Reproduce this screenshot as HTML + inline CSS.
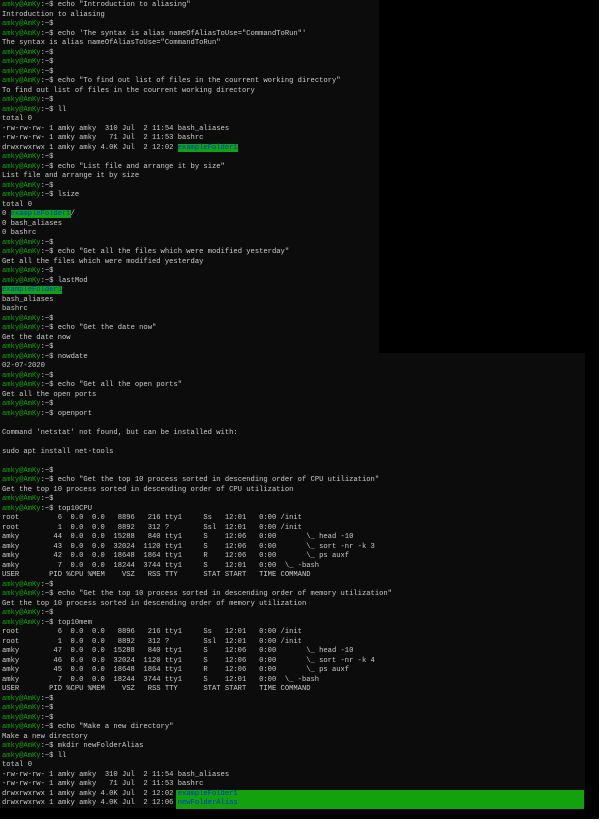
<!DOCTYPE html>
<html><head><meta charset="utf-8"><style>
html,body{margin:0;padding:0;background:#fff;width:605px;height:822px;overflow:hidden}
.bk{position:absolute;left:0;top:0;width:599px;height:819px;background:#000}
.a{position:absolute;left:0;top:0;width:379px;height:353px;background:#0c0c0c}
.b{position:absolute;left:0;top:353px;width:585px;height:455px;background:#0c0c0c}
.bar{position:absolute;left:176px;top:790px;width:408px;height:19px;background:#13a10e}
pre{position:absolute;left:2px;top:1px;margin:0;font-family:"Liberation Mono",monospace;font-size:7.15px;line-height:9.5px;color:#cccccc;white-space:pre}
.p{color:#13a10e}
.h{background:#13a10e;color:#0037da}
.f{color:#0037da}
</style></head><body>
<div class="bk"></div><div class="a"></div><div class="b"></div><div class="bar"></div>
<pre><span class="p">amky@AmKy</span>:~$ echo "Introduction to aliasing"
Introduction to aliasing
<span class="p">amky@AmKy</span>:~$
<span class="p">amky@AmKy</span>:~$ echo 'The syntax is alias nameOfAliasToUse="CommandToRun"'
The syntax is alias nameOfAliasToUse="CommandToRun"
<span class="p">amky@AmKy</span>:~$
<span class="p">amky@AmKy</span>:~$
<span class="p">amky@AmKy</span>:~$
<span class="p">amky@AmKy</span>:~$ echo "To find out list of files in the courrent working directory"
To find out list of files in the courrent working directory
<span class="p">amky@AmKy</span>:~$
<span class="p">amky@AmKy</span>:~$ ll
total 0
-rw-rw-rw- 1 amky amky  310 Jul  2 11:54 bash_aliases
-rw-rw-rw- 1 amky amky   71 Jul  2 11:53 bashrc
drwxrwxrwx 1 amky amky 4.0K Jul  2 12:02 <span class="h">exampleFolder1</span>
<span class="p">amky@AmKy</span>:~$
<span class="p">amky@AmKy</span>:~$ echo "List file and arrange it by size"
List file and arrange it by size
<span class="p">amky@AmKy</span>:~$
<span class="p">amky@AmKy</span>:~$ lsize
total 0
0 <span class="h">exampleFolder1</span>/
0 bash_aliases
0 bashrc
<span class="p">amky@AmKy</span>:~$
<span class="p">amky@AmKy</span>:~$ echo "Get all the files which were modified yesterday"
Get all the files which were modified yesterday
<span class="p">amky@AmKy</span>:~$
<span class="p">amky@AmKy</span>:~$ lastMod
<span class="h">exampleFolder1</span>
bash_aliases
bashrc
<span class="p">amky@AmKy</span>:~$
<span class="p">amky@AmKy</span>:~$ echo "Get the date now"
Get the date now
<span class="p">amky@AmKy</span>:~$
<span class="p">amky@AmKy</span>:~$ nowdate
02-07-2020
<span class="p">amky@AmKy</span>:~$
<span class="p">amky@AmKy</span>:~$ echo "Get all the open ports"
Get all the open ports
<span class="p">amky@AmKy</span>:~$
<span class="p">amky@AmKy</span>:~$ openport

Command 'netstat' not found, but can be installed with:

sudo apt install net-tools

<span class="p">amky@AmKy</span>:~$
<span class="p">amky@AmKy</span>:~$ echo "Get the top 10 process sorted in descending order of CPU utilization"
Get the top 10 process sorted in descending order of CPU utilization
<span class="p">amky@AmKy</span>:~$
<span class="p">amky@AmKy</span>:~$ top10CPU
root         6  0.0  0.0   8896   216 tty1     Ss   12:01   0:00 /init
root         1  0.0  0.0   8892   312 ?        Ssl  12:01   0:00 /init
amky        44  0.0  0.0  15288   840 tty1     S    12:06   0:00       \_ head -10
amky        43  0.0  0.0  32024  1120 tty1     S    12:06   0:00       \_ sort -nr -k 3
amky        42  0.0  0.0  18648  1864 tty1     R    12:06   0:00       \_ ps auxf
amky         7  0.0  0.0  18244  3744 tty1     S    12:01   0:00  \_ -bash
USER       PID %CPU %MEM    VSZ   RSS TTY      STAT START   TIME COMMAND
<span class="p">amky@AmKy</span>:~$
<span class="p">amky@AmKy</span>:~$ echo "Get the top 10 process sorted in descending order of memory utilization"
Get the top 10 process sorted in descending order of memory utilization
<span class="p">amky@AmKy</span>:~$
<span class="p">amky@AmKy</span>:~$ top10mem
root         6  0.0  0.0   8896   216 tty1     Ss   12:01   0:00 /init
root         1  0.0  0.0   8892   312 ?        Ssl  12:01   0:00 /init
amky        47  0.0  0.0  15288   840 tty1     S    12:06   0:00       \_ head -10
amky        46  0.0  0.0  32024  1120 tty1     S    12:06   0:00       \_ sort -nr -k 4
amky        45  0.0  0.0  18648  1864 tty1     R    12:06   0:00       \_ ps auxf
amky         7  0.0  0.0  18244  3744 tty1     S    12:01   0:00  \_ -bash
USER       PID %CPU %MEM    VSZ   RSS TTY      STAT START   TIME COMMAND
<span class="p">amky@AmKy</span>:~$
<span class="p">amky@AmKy</span>:~$
<span class="p">amky@AmKy</span>:~$
<span class="p">amky@AmKy</span>:~$ echo "Make a new directory"
Make a new directory
<span class="p">amky@AmKy</span>:~$ mkdir newFolderAlias
<span class="p">amky@AmKy</span>:~$ ll
total 0
-rw-rw-rw- 1 amky amky  310 Jul  2 11:54 bash_aliases
-rw-rw-rw- 1 amky amky   71 Jul  2 11:53 bashrc
drwxrwxrwx 1 amky amky 4.0K Jul  2 12:02 <span class="f">exampleFolder1</span>
drwxrwxrwx 1 amky amky 4.0K Jul  2 12:06 <span class="f">newFolderAlias</span></pre>
</body></html>
